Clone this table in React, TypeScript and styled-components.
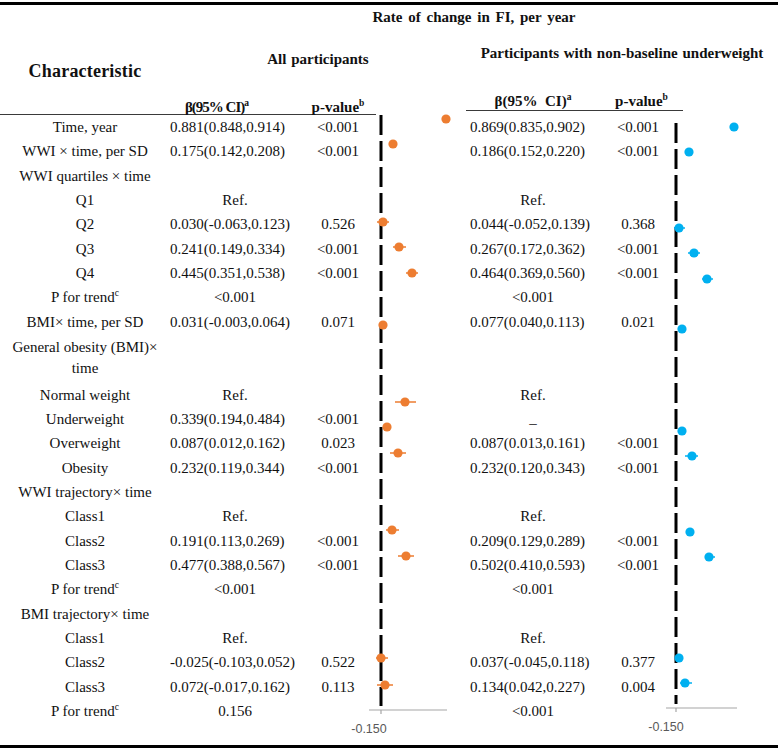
import React from "react";
import styled, { createGlobalStyle } from "styled-components";

const Global = createGlobalStyle`
  html, body { margin: 0; padding: 0; background: #fff; }
  body { font-family: "Liberation Serif", "Times New Roman", serif; color: #111; }
`;

const COLS = "170px 130px 76px 90px 134px 76px 102px";
const ROW_H = 24.33;

const Page = styled.div`
  width: 778px;
  padding-top: 2px;
  display: flex;
  flex-direction: column;
`;

const Rule = styled.div<{ $mt?: number }>`
  height: 3px;
  background: #000;
  margin-top: ${(p) => p.$mt ?? 0}px;
`;

const Header = styled.div`
  display: grid;
  grid-template-columns: ${COLS};
  grid-template-rows: 25px 62px 23px;
  font-weight: bold;
`;

const Title = styled.div`
  grid-column: 2 / 8;
  grid-row: 1;
  text-align: center;
  font-size: 15px;
  line-height: 25px;
  word-spacing: 2px;
`;

const CharHead = styled.div`
  grid-column: 1;
  grid-row: 2;
  padding-top: 31px;
  text-align: center;
  font-size: 18px;
  line-height: 20px;
  letter-spacing: 0.2px;
`;

const GroupTitle = styled.div<{ $cols: string; $top: number }>`
  grid-column: ${(p) => p.$cols};
  grid-row: 2;
  padding-top: ${(p) => p.$top}px;
  text-align: center;
  font-size: 15px;
  line-height: 18px;
  word-spacing: 1px;
`;

const SubHead = styled.div<{
  $col: string;
  $raise?: number;
  $shift?: number;
  $extend?: number;
  $lh?: number;
  $tight?: boolean;
}>`
  grid-column: ${(p) => p.$col};
  grid-row: 3;
  display: flex;
  align-items: flex-end;
  justify-content: center;
  font-size: 15px;
  line-height: ${(p) => p.$lh ?? 18}px;
  letter-spacing: ${(p) => (p.$tight ? "-1px" : "0")};
  border-bottom: 1.5px solid #3a3a3a;
  margin-bottom: ${(p) => p.$raise ?? 0}px;
  padding-right: ${(p) => p.$shift ?? 0}px;
  margin-right: ${(p) => -(p.$extend ?? 0)}px;
`;

const Sup = styled.sup`
  font-size: 9.5px;
  line-height: 0;
  vertical-align: 6px;
  letter-spacing: 0;
`;

const Body = styled.div`
  display: grid;
  grid-template-columns: ${COLS};
  grid-template-rows: repeat(25, ${ROW_H}px);
  font-size: 15px;
  line-height: ${ROW_H}px;
`;

const Cell = styled.div<{ $col: number; $row: number; $span?: number; $left?: boolean; $pad?: number }>`
  grid-column: ${(p) => p.$col};
  grid-row: ${(p) => p.$row} / span ${(p) => p.$span ?? 1};
  text-align: ${(p) => (p.$left ? "left" : "center")};
  padding-left: ${(p) => (p.$left ? p.$pad ?? 0 : 0)}px;
  white-space: nowrap;
`;

const TwoLine = styled.span`
  display: block;
  padding-top: 3px;
  line-height: 21px;
`;

const Dash = styled.span`
  display: inline-block;
  transform: translateY(4px);
`;

const PlotSvg = styled.svg<{ $col: number }>`
  grid-column: ${(p) => p.$col};
  grid-row: 1 / span 25;
  display: block;
  overflow: visible;
`;

type DataRow = {
  label: React.ReactNode;
  b1?: React.ReactNode;
  p1?: string;
  b2?: React.ReactNode;
  p2?: string;
  c?: boolean;
  span?: number;
  none2?: boolean;
};

const trend = (
  <>
    P for trend<Sup>c</Sup>
  </>
);

const rows: DataRow[] = [
  { label: "Time, year", b1: "0.881(0.848,0.914)", p1: "<0.001", b2: "0.869(0.835,0.902)", p2: "<0.001" },
  { label: "WWI × time,  per SD", b1: "0.175(0.142,0.208)", p1: "<0.001", b2: "0.186(0.152,0.220)", p2: "<0.001" },
  { label: "WWI quartiles × time" },
  { label: "Q1", b1: "Ref.", b2: "Ref.", c: true },
  { label: "Q2", b1: "0.030(-0.063,0.123)", p1: "0.526", b2: "0.044(-0.052,0.139)", p2: "0.368" },
  { label: "Q3", b1: "0.241(0.149,0.334)", p1: "<0.001", b2: "0.267(0.172,0.362)", p2: "<0.001" },
  { label: "Q4", b1: "0.445(0.351,0.538)", p1: "<0.001", b2: "0.464(0.369,0.560)", p2: "<0.001" },
  { label: trend, b1: "<0.001", b2: "<0.001", c: true },
  { label: "BMI× time,  per SD", b1: "0.031(-0.003,0.064)", p1: "0.071", b2: "0.077(0.040,0.113)", p2: "0.021" },
  {
    label: (
      <TwoLine>
        General obesity (BMI)×
        <br />
        time
      </TwoLine>
    ),
    span: 2,
  },
  { label: "Normal weight", b1: "Ref.", b2: "Ref.", c: true },
  { label: "Underweight", b1: "0.339(0.194,0.484)", p1: "<0.001", none2: true },
  { label: "Overweight", b1: "0.087(0.012,0.162)", p1: "0.023", b2: "0.087(0.013,0.161)", p2: "<0.001" },
  { label: "Obesity", b1: "0.232(0.119,0.344)", p1: "<0.001", b2: "0.232(0.120,0.343)", p2: "<0.001" },
  { label: "WWI trajectory× time" },
  { label: "Class1", b1: "Ref.", b2: "Ref.", c: true },
  { label: "Class2", b1: "0.191(0.113,0.269)", p1: "<0.001", b2: "0.209(0.129,0.289)", p2: "<0.001" },
  { label: "Class3", b1: "0.477(0.388,0.567)", p1: "<0.001", b2: "0.502(0.410,0.593)", p2: "<0.001" },
  { label: trend, b1: "<0.001", b2: "<0.001", c: true },
  { label: "BMI trajectory× time" },
  { label: "Class1", b1: "Ref.", b2: "Ref.", c: true },
  { label: "Class2", b1: "-0.025(-0.103,0.052)", p1: "0.522", b2: "0.037(-0.045,0.118)", p2: "0.377" },
  { label: "Class3", b1: "0.072(-0.017,0.162)", p1: "0.113", b2: "0.134(0.042,0.227)", p2: "0.004" },
  { label: trend, b1: "0.156", b2: "<0.001", c: true },
];

type Dot = { x: number; y: number; lo?: number; hi?: number };

const leftDots: Dot[] = [
  { x: 446, y: 119 },
  { x: 393, y: 144 },
  { x: 383, y: 222, lo: 377, hi: 389 },
  { x: 399, y: 247, lo: 393, hi: 406 },
  { x: 412, y: 273, lo: 406, hi: 418 },
  { x: 383, y: 325 },
  { x: 405, y: 402, lo: 395, hi: 416 },
  { x: 387, y: 427 },
  { x: 398, y: 453, lo: 390, hi: 406 },
  { x: 392, y: 530, lo: 386, hi: 399 },
  { x: 406, y: 556, lo: 398, hi: 414 },
  { x: 381, y: 658, lo: 376, hi: 388 },
  { x: 385, y: 685, lo: 377, hi: 393 },
];

const rightDots: Dot[] = [
  { x: 734, y: 127 },
  { x: 689, y: 152 },
  { x: 679, y: 228, lo: 674, hi: 685 },
  { x: 694, y: 253, lo: 688, hi: 700 },
  { x: 707, y: 279, lo: 702, hi: 713 },
  { x: 682, y: 329 },
  { x: 682, y: 431 },
  { x: 692, y: 456, lo: 685, hi: 698 },
  { x: 690, y: 532 },
  { x: 709, y: 557, lo: 705, hi: 715 },
  { x: 679, y: 658 },
  { x: 685, y: 683, lo: 680, hi: 692 },
];

type PlotProps = {
  col: number;
  x0: number;
  width: number;
  zeroX: number;
  dashTop: number;
  axisY: number;
  axisFrom: number;
  axisTo: number;
  labelY: number;
  dots: Dot[];
  color: string;
};

const BODY_TOP = 115;
const BODY_H = ROW_H * 25;

function Plot(p: PlotProps) {
  return (
    <PlotSvg
      $col={p.col}
      width={p.width}
      height={BODY_H}
      viewBox={`${p.x0} ${BODY_TOP} ${p.width} ${BODY_H}`}
    >
      <line x1={p.axisFrom} x2={p.axisTo} y1={p.axisY} y2={p.axisY} stroke="#a6a6a6" strokeWidth={1.2} />
      <line x1={p.zeroX} x2={p.zeroX} y1={p.axisY} y2={p.axisY + 4} stroke="#a6a6a6" strokeWidth={1.2} />
      <line
        x1={p.zeroX}
        x2={p.zeroX}
        y1={p.dashTop}
        y2={p.axisY - 4}
        stroke="#000"
        strokeWidth={3}
        strokeDasharray="20 6"
      />
      {p.dots.map((d, i) => (
        <g key={i}>
          {d.lo !== undefined && (
            <line x1={d.lo} x2={d.hi} y1={d.y} y2={d.y} stroke={p.color} strokeWidth={1.5} />
          )}
          <circle cx={d.x} cy={d.y} r={4.6} fill={p.color} />
        </g>
      ))}
      <text
        x={p.axisFrom}
        y={p.labelY}
        textAnchor="middle"
        fontFamily="'Liberation Sans', Arial, sans-serif"
        fontSize={12.5}
        fill="#595959"
      >
        -0.150
      </text>
    </PlotSvg>
  );
}

export default function App() {
  let r = 1;
  const cells: React.ReactNode[] = [];
  rows.forEach((row, i) => {
    const span = row.span ?? 1;
    cells.push(
      <Cell key={`l${i}`} $col={1} $row={r} $span={span}>
        {row.label}
      </Cell>
    );
    if (row.b1)
      cells.push(
        <Cell key={`b1${i}`} $col={2} $row={r} $left={!row.c}>
          {row.b1}
        </Cell>
      );
    if (row.p1)
      cells.push(
        <Cell key={`p1${i}`} $col={3} $row={r}>
          {row.p1}
        </Cell>
      );
    if (row.b2)
      cells.push(
        <Cell key={`b2${i}`} $col={5} $row={r} $left={!row.c} $pad={4}>
          {row.b2}
        </Cell>
      );
    if (row.p2)
      cells.push(
        <Cell key={`p2${i}`} $col={6} $row={r}>
          {row.p2}
        </Cell>
      );
    if (row.none2)
      cells.push(
        <Cell key={`dash${i}`} $col={5} $row={r}>
          <Dash>–</Dash>
        </Cell>
      );
    r += span;
  });

  return (
    <>
      <Global />
      <Page>
        <Rule />
        <Header>
          <Title>Rate of change in FI, per year</Title>
          <CharHead>Characteristic</CharHead>
          <GroupTitle $cols="2 / 5" $top={20}>
            All participants
          </GroupTitle>
          <GroupTitle $cols="5 / 8" $top={14}>
            Participants with non-baseline underweight
          </GroupTitle>
          <SubHead $col="1" />
          <SubHead $col="2" $shift={36} $lh={13} $tight>
            <span>
              β(95% CI)<Sup>a</Sup>
            </span>
          </SubHead>
          <SubHead $col="3" $lh={13}>
            <span>
              p-value<Sup>b</Sup>
            </span>
          </SubHead>
          <SubHead $col="5" $raise={4}>
            <span>
              β(95%&nbsp; CI)<Sup>a</Sup>
            </span>
          </SubHead>
          <SubHead $col="6" $raise={4} $extend={7}>
            <span>
              p-value<Sup>b</Sup>
            </span>
          </SubHead>
        </Header>
        <Body>
          {cells}
          <Plot
            col={4}
            x0={376}
            width={90}
            zeroX={381}
            dashTop={115}
            axisY={710}
            axisFrom={369}
            axisTo={447}
            labelY={733}
            dots={leftDots}
            color="#ED7D31"
          />
          <Plot
            col={7}
            x0={676}
            width={102}
            zeroX={676}
            dashTop={123}
            axisY={708}
            axisFrom={666}
            axisTo={737}
            labelY={731}
            dots={rightDots}
            color="#00B0F0"
          />
        </Body>
        <Rule $mt={22} />
      </Page>
    </>
  );
}
